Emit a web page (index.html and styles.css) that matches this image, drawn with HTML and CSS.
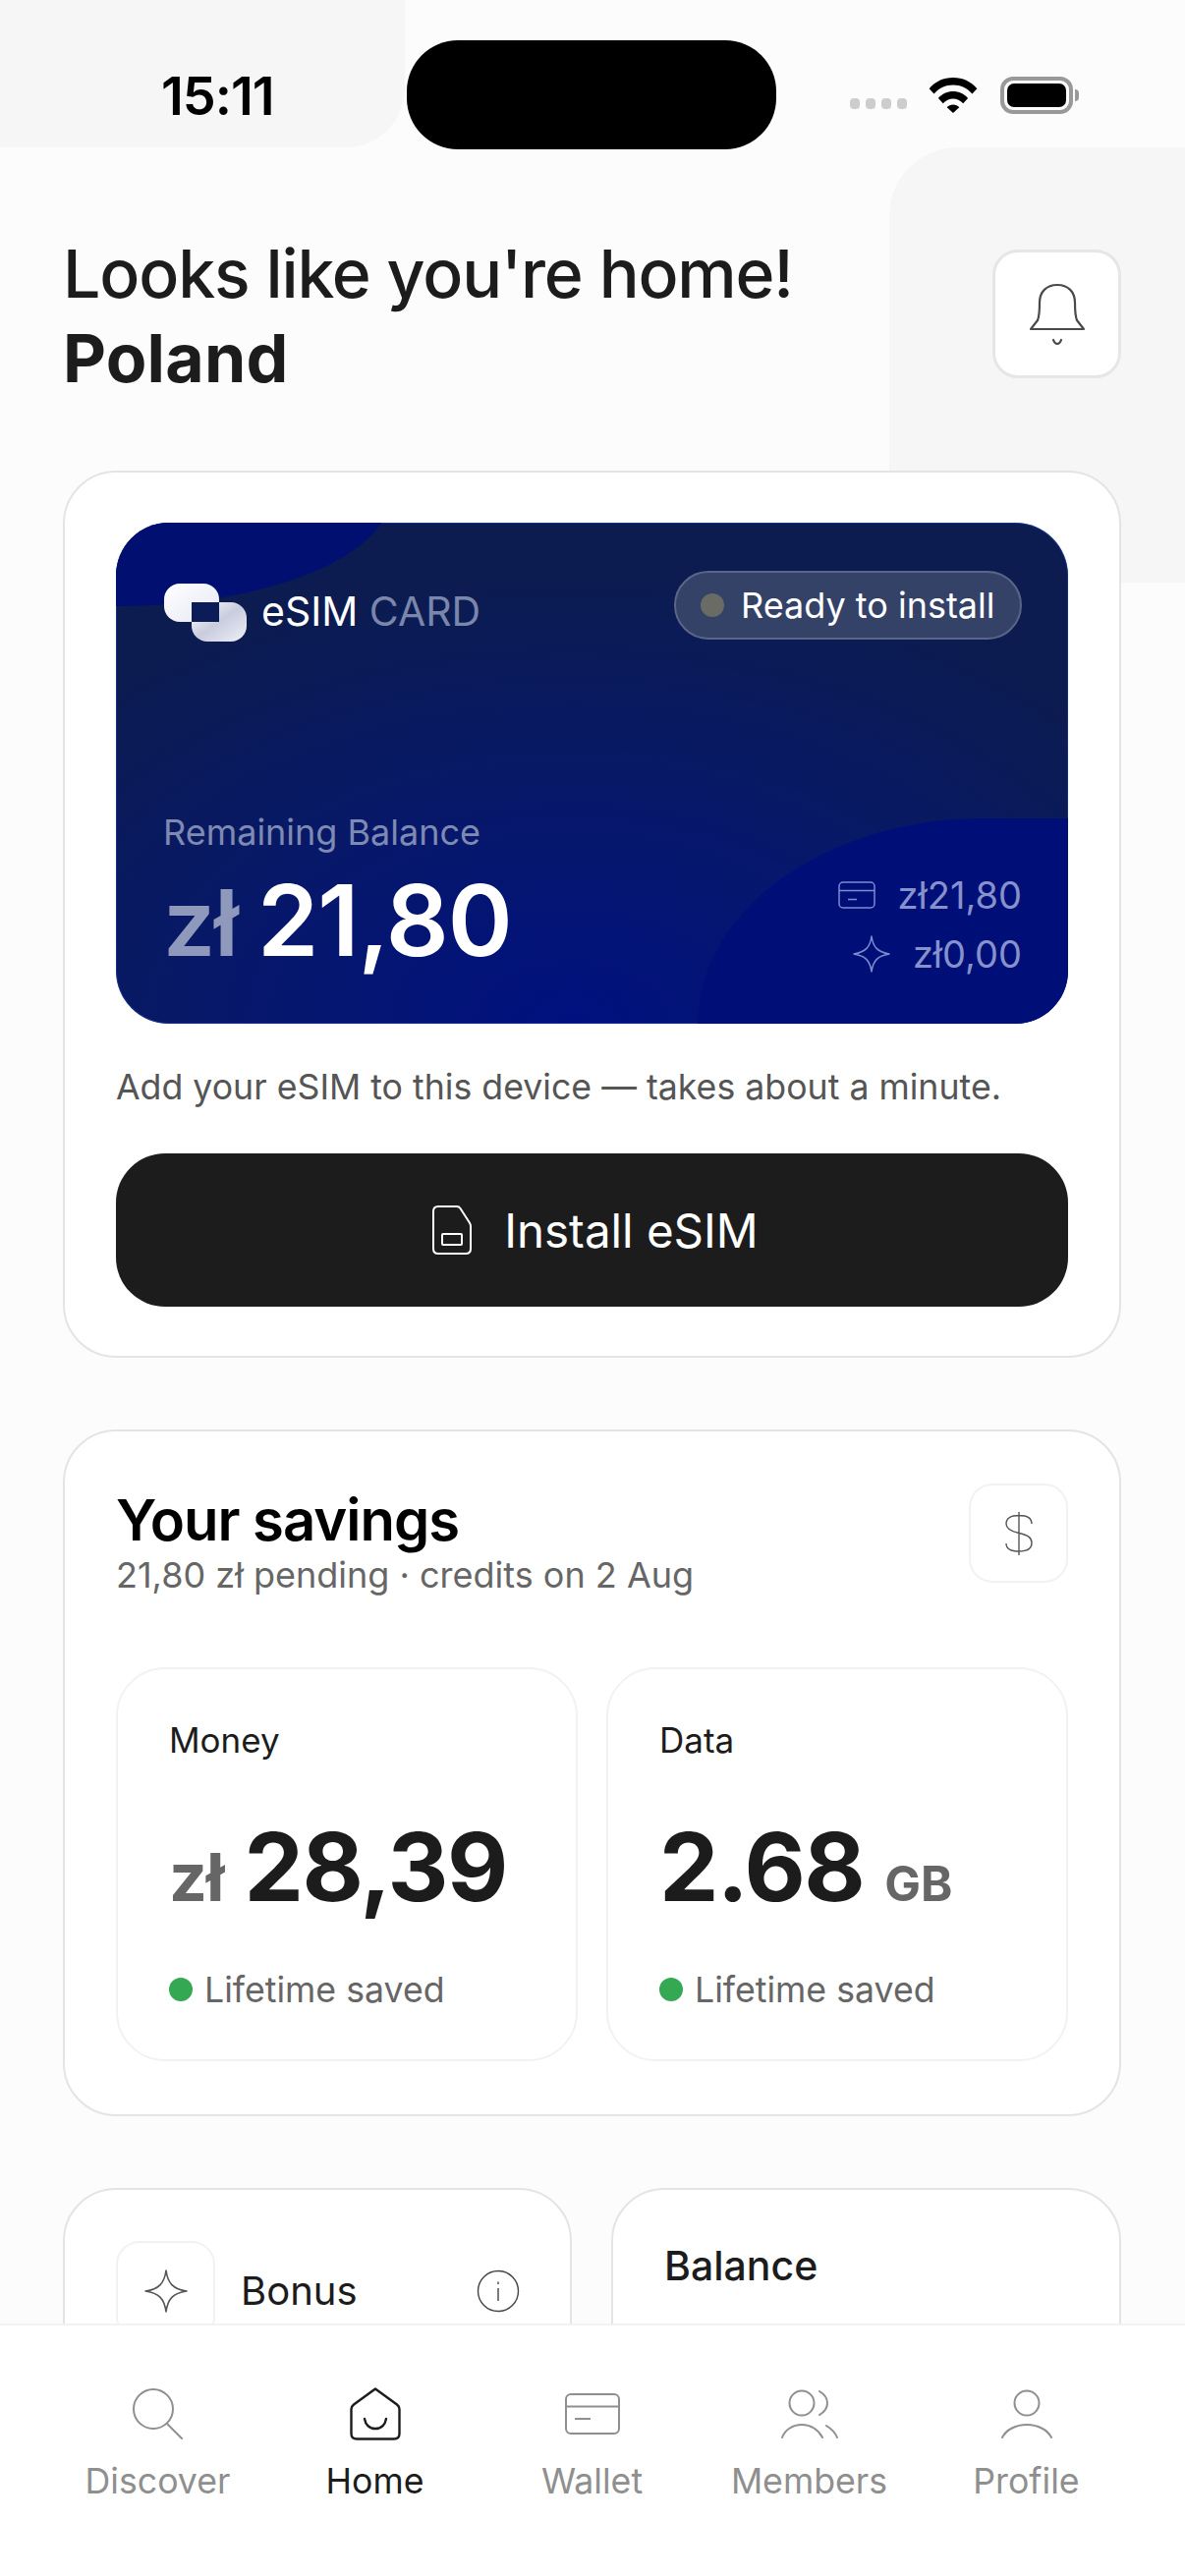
FILE: index.html
```html
<!DOCTYPE html>
<html lang="en">
<head>
  <meta charset="UTF-8">
  <meta name="viewport" content="width=device-width, initial-scale=1.0">
  <title>Home</title>
  <link rel="stylesheet" href="styles.css">
</head>
<body>
  <div class="screen">
    <div class="bg-shape-left"></div>
    <div class="bg-shape-right"></div>
    <div class="island"></div>

    <header class="status-bar">
      <span class="time">15:11</span>
      <div class="status-icons">
        <div class="signal"><i></i><i></i><i></i><i></i></div>
        <svg class="wifi" viewBox="0 0 50 38">
          <path d="M0 12.500C6.500 5 15 1 25 1s18.500 4 25 11.500l-5 5.500C39.500 12 33 8.800 25 8.800S10.500 12 5 18z"/>
          <path d="M9.500 22.500C13.500 18 19 15.500 25 15.500s11.500 2.500 15.500 7l-5 5.500C32.500 25 29 23.200 25 23.200S17.500 25 14.500 28z"/>
          <path d="M18.500 32c1.800-1.800 4-2.800 6.500-2.800s4.700 1 6.500 2.800L25 38z"/>
        </svg>
        <div class="battery"><div class="battery-fill"></div></div>
        <div class="battery-cap"></div>
      </div>
    </header>

    <main class="content">
      <section class="greeting">
        <h1>Looks like you're home!<br><strong>Poland</strong></h1>
        <button class="bell-btn">
          <svg width="58" height="64" viewBox="0 0 58 64" fill="none" stroke="#4a4a4a" stroke-width="2.200">
            <path d="M2 47l7-9c2-5 2-10 2-18C11 9 18 2 29 2s18 7 18 18c0 8 0 13 2 18l7 9z" stroke-linejoin="round"/>
            <path d="M25 58c1 3 2 4 4 4s3-1 4-4" stroke-linecap="round"/>
          </svg>
        </button>
      </section>

      <section class="card install-card">
        <div class="esim">
          <div class="blob-top"></div>
          <div class="blob-bottom"></div>
          <div class="esim-top">
            <div class="esim-brand">
              <svg class="esim-logo" width="86" height="62" viewBox="0 0 86 62">
                <defs>
                  <linearGradient id="logoA" x1="0" y1="0" x2="1" y2="1">
                    <stop offset="0" stop-color="#ffffff"/>
                    <stop offset="1" stop-color="#e6e8f4"/>
                  </linearGradient>
                  <linearGradient id="logoB" x1="0" y1="0" x2="1" y2="1">
                    <stop offset="0" stop-color="#ffffff"/>
                    <stop offset="0.5" stop-color="#c9ccdd"/>
                    <stop offset="1" stop-color="#eef0f7"/>
                  </linearGradient>
                </defs>
                <rect x="1" y="1" width="56" height="39" rx="16" fill="url(#logoA)"/>
                <rect x="29" y="20" width="56" height="40" rx="16" fill="url(#logoB)"/>
                <rect x="29" y="20" width="28" height="20" fill="#0c1c58"/>
              </svg>
              <span class="esim-name">eSIM <span class="esim-name-dim">CARD</span></span>
            </div>
            <div class="pill"><span class="pill-dot"></span>Ready to install</div>
          </div>
          <div class="esim-bottom">
            <div>
              <div class="remain-label">Remaining Balance</div>
              <div class="remain-amount"><span class="remain-cur">zł</span> 21,80</div>
            </div>
            <div class="breakdown">
              <div class="breakdown-row">
                <svg width="38" height="28" viewBox="0 0 38 28" fill="none" stroke="#7f8ad0" stroke-width="1.500">
                  <rect x="1" y="1" width="36" height="26" rx="4"/>
                  <path d="M1 9.500h36M10 18.500h9"/>
                </svg>
                <span>zł21,80</span>
              </div>
              <div class="breakdown-row">
                <svg width="38" height="38" viewBox="0 0 38 38" fill="none" stroke="#7f8ad0" stroke-width="1.500">
                  <path d="M19 1c1.500 11 6 16 18 18-12 2-16.500 7-18 18-1.500-11-6-16-18-18 12-2 16.500-7 18-18z" stroke-linejoin="round"/>
                </svg>
                <span>zł0,00</span>
              </div>
            </div>
          </div>
        </div>
        <p class="install-note">Add your eSIM to this device — takes about a minute.</p>
        <button class="install-btn">
          <svg width="40" height="50" viewBox="0 0 40 50" fill="none" stroke="#fff" stroke-width="2">
            <path d="M6 1h19c1.500 0 2.500.5 3.500 2L37.500 17c1 1.500 1.500 2.500 1.500 4v23c0 3-2 5-5 5H6c-3 0-5-2-5-5V6c0-3 2-5 5-5z"/>
            <rect x="10" y="29" width="20" height="11" rx="1"/>
          </svg>
          Install eSIM
        </button>
      </section>

      <section class="card savings-card">
        <div class="savings-head">
          <div class="savings-text">
            <h2>Your savings</h2>
            <p class="savings-sub">21,80 zł pending · credits on 2 Aug</p>
          </div>
          <div class="icon-box">
            <svg width="30" height="46" viewBox="0 0 30 46" fill="none" stroke="#555" stroke-width="1.400">
              <path d="M28 13c0-6-5-8.500-13-8.500S2 7 2 13c0 5 4 7.500 13 9.500s13 4.500 13 10c0 6-5 8.500-13 8.500S2 38.500 2 33M15 1v44"/>
            </svg>
          </div>
        </div>
        <div class="savings-grid">
          <div class="stat">
            <div class="stat-label">Money</div>
            <div class="stat-value"><span class="stat-cur">zł</span> 28,39</div>
            <div class="stat-foot"><span class="green-dot"></span>Lifetime saved</div>
          </div>
          <div class="stat">
            <div class="stat-label">Data</div>
            <div class="stat-value">2.68 <span class="stat-unit">GB</span></div>
            <div class="stat-foot"><span class="green-dot"></span>Lifetime saved</div>
          </div>
        </div>
      </section>

      <section class="bottom-cards">
        <div class="card mini-card">
          <div class="bonus-row">
            <div class="icon-box">
              <svg width="44" height="44" viewBox="0 0 44 44" fill="none" stroke="#555" stroke-width="1.600">
                <path d="M22 1c1.800 13 7 19 21 21-14 2-19.200 8-21 21-1.800-13-7-19-21-21 14-2 19.200-8 21-21z" stroke-linejoin="round"/>
              </svg>
            </div>
            <span class="bonus-label">Bonus</span>
            <svg class="info" width="44" height="44" viewBox="0 0 44 44" fill="none" stroke="#444" stroke-width="1.400">
              <circle cx="22" cy="22" r="20.500"/>
              <path d="M22 19v13M22 12.500v2.500"/>
            </svg>
          </div>
        </div>
        <div class="card mini-card">
          <div class="balance-label">Balance</div>
        </div>
      </section>
    </main>

    <nav class="tabbar">
      <div class="tab">
        <div class="tab-icon">
          <svg width="52" height="52" viewBox="0 0 52 52" fill="none" stroke="#8f8f8f" stroke-width="2">
            <circle cx="21" cy="21" r="20"/><path d="M35 36l15 15" stroke-linecap="round"/>
          </svg>
        </div>
        <span>Discover</span>
      </div>
      <div class="tab active">
        <div class="tab-icon">
          <svg width="52" height="54" viewBox="0 0 52 54" fill="none" stroke="#1c1c1c" stroke-width="2.400">
            <path d="M26 1.500L48 17.500Q50.500 19.500 50.500 22V47Q50.500 52.500 45 52.500H7Q1.500 52.500 1.500 47V22Q1.500 19.500 4 17.500z" stroke-linejoin="round"/>
            <path d="M15 32c1 6 5 10 11 10s10-4 11-10" stroke-linecap="round"/>
          </svg>
        </div>
        <span>Home</span>
      </div>
      <div class="tab">
        <div class="tab-icon">
          <svg width="56" height="42" viewBox="0 0 56 42" fill="none" stroke="#8f8f8f" stroke-width="2">
            <rect x="1" y="1" width="54" height="40" rx="5"/>
            <path d="M1 13.500h54M10 26h16"/>
          </svg>
        </div>
        <span>Wallet</span>
      </div>
      <div class="tab">
        <div class="tab-icon">
          <svg width="58" height="50" viewBox="0 0 58 50" fill="none" stroke="#8f8f8f" stroke-width="2">
            <circle cx="21" cy="14" r="12.500"/>
            <path d="M39 2c5 3 8 7 8 12s-3 9-8 12M1 49c3-8 11-13 20-13s17 5 21 13M46 37c5 3 9 7 11 12" stroke-linecap="round"/>
          </svg>
        </div>
        <span>Members</span>
      </div>
      <div class="tab">
        <div class="tab-icon">
          <svg width="52" height="50" viewBox="0 0 52 50" fill="none" stroke="#8f8f8f" stroke-width="2">
            <circle cx="26" cy="14" r="12.500"/>
            <path d="M1 49c4-8 14-13 25-13s21 5 25 13" stroke-linecap="round"/>
          </svg>
        </div>
        <span>Profile</span>
      </div>
    </nav>
  </div>
</body>
</html>
```

FILE: styles.css
```css
* {
  box-sizing: border-box;
}

body {
  margin: 0;
  padding: 0;
  font-family: 'Inter', 'Liberation Sans', sans-serif;
  background-color: #fcfcfc;
  color: #1c1c1c;
}

.screen {
  position: relative;
  width: 1206px;
  height: 2622px;
  overflow: hidden;
  display: flex;
  flex-direction: column;
}

.bg-shape-left {
  position: absolute;
  left: 0;
  top: 0;
  width: 412px;
  height: 150px;
  background-color: #f6f6f6;
  border-bottom-right-radius: 60px;
}

.bg-shape-right {
  position: absolute;
  left: 905px;
  top: 150px;
  width: 301px;
  height: 443px;
  background-color: #f6f6f6;
  border-top-left-radius: 70px;
}

.island {
  position: absolute;
  left: 414px;
  top: 41px;
  width: 376px;
  height: 111px;
  background-color: #000;
  border-radius: 52px;
}

/* status bar */
.status-bar {
  position: relative;
  height: 150px;
  flex-shrink: 0;
  display: flex;
  justify-content: space-between;
  padding: 0 108px 0 164px;
}

.time {
  font-size: 54px;
  font-weight: 600;
  color: #000;
  line-height: 50px;
  margin-top: 73px;
  letter-spacing: -1px;
}

.status-icons {
  display: flex;
  align-items: center;
  height: 40px;
  margin-top: 77px;
}

.signal {
  display: flex;
  gap: 6px;
  margin-top: 16px;
  margin-right: 22px;
}

.signal i {
  display: block;
  width: 10px;
  height: 11px;
  border-radius: 4px;
  background-color: #cdcdcd;
}

.wifi {
  width: 50px;
  height: 37px;
  margin-right: 23px;
  margin-top: -2px;
}

.battery {
  width: 74px;
  height: 38px;
  border: 4px solid #999;
  border-radius: 13px;
  padding: 3px;
}

.battery-fill {
  width: 100%;
  height: 100%;
  background-color: #000;
  border-radius: 7px;
}

.battery-cap {
  width: 4px;
  height: 12px;
  margin-left: 2px;
  background-color: #999;
  border-radius: 0 4px 4px 0;
}

/* main scroll area */
.content {
  position: relative;
  flex: 1;
  overflow: hidden;
  padding: 85px 65px 0 64px;
}

.greeting {
  display: flex;
  justify-content: space-between;
  align-items: center;
  margin-bottom: 72px;
}

h1 {
  margin: 0;
  font-size: 68px;
  font-weight: 500;
  line-height: 86px;
  letter-spacing: -1.15px;
  color: #1c1c1c;
}

h1 strong {
  font-weight: 700;
  letter-spacing: 0.2px;
}

.bell-btn {
  width: 131px;
  height: 131px;
  padding: 0;
  margin-bottom: 3px;
  display: flex;
  align-items: center;
  justify-content: center;
  background-color: #fff;
  border: 3px solid #e6e6e6;
  border-radius: 26px;
}

.card {
  background-color: #fff;
  border: 2px solid #e4e4e4;
  border-radius: 54px;
}

.install-card {
  height: 903px;
  padding: 51px 52px;
  margin-bottom: 73px;
}

/* esim card */
.esim {
  position: relative;
  height: 510px;
  overflow: hidden;
  border-radius: 54px;
  padding: 49px 47px 0 48px;
  color: #fff;
  display: flex;
  flex-direction: column;
  justify-content: space-between;
  background: radial-gradient(ellipse 75% 90% at 48% 100%, #00107f 0%, #07186a 50%, #0c1c50 100%);
  box-shadow: inset 0 0 0 1px rgba(30, 70, 190, 0.5);
}

.blob-top {
  position: absolute;
  left: -280px;
  top: -145px;
  width: 560px;
  height: 230px;
  border-radius: 50%;
  background-color: #000f70;
}

.blob-bottom {
  position: absolute;
  left: 592px;
  top: 301px;
  width: 700px;
  height: 600px;
  border-top-left-radius: 290px 210px;
  background-color: #000f78;
}

.esim-top {
  position: relative;
  display: flex;
  justify-content: space-between;
  align-items: flex-start;
}

.esim-brand {
  display: flex;
  align-items: center;
  gap: 14px;
  margin-top: 12px;
}

.esim-name {
  font-size: 41px;
  color: #fff;
  margin-top: -4px;
}

.esim-name-dim {
  color: #7b86ab;
}

.pill {
  display: flex;
  align-items: center;
  gap: 17px;
  width: 354px;
  height: 70px;
  padding-left: 25px;
  font-size: 36px;
  color: #fff;
  background-color: #354268;
  border: 2px solid #5a6588;
  border-radius: 35px;
}

.pill-dot {
  width: 24px;
  height: 24px;
  border-radius: 50%;
  background-color: #6b6b66;
}

.esim-bottom {
  position: relative;
  display: flex;
  justify-content: space-between;
  align-items: flex-end;
  padding-bottom: 48px;
}

.remain-label {
  font-size: 36px;
  color: #7f8ab3;
  margin-bottom: 13px;
}

.remain-amount {
  font-size: 100px;
  font-weight: 600;
  line-height: 110px;
  letter-spacing: -1px;
  word-spacing: -4px;
}

.remain-cur {
  font-size: 94px;
  color: #8f99bb;
}

.breakdown {
  display: flex;
  flex-direction: column;
  align-items: flex-end;
  gap: 18px;
  margin-bottom: 2px;
  color: #8791cc;
  font-size: 38px;
}

.breakdown-row {
  display: flex;
  align-items: center;
  gap: 23px;
  height: 42px;
}

.install-note {
  margin: 42px 0 0;
  font-size: 35.7px;
  line-height: 44px;
  color: #555;
}

.install-btn {
  width: 100%;
  height: 156px;
  margin-top: 46px;
  padding: 0 0 0 7px;
  display: flex;
  align-items: center;
  justify-content: center;
  gap: 33px;
  background-color: #1c1c1c;
  color: #fff;
  border: none;
  border-radius: 50px;
  font-family: inherit;
  font-size: 47.5px;
}

/* savings */
.savings-card {
  height: 699px;
  padding: 53px 52px 0;
  margin-bottom: 73px;
}

.savings-head {
  display: flex;
  justify-content: space-between;
  align-items: flex-start;
}

.savings-text {
  padding-top: 3px;
}

h2 {
  margin: 0;
  font-size: 58px;
  font-weight: 600;
  line-height: 68px;
  letter-spacing: -1px;
  color: #000;
}

.savings-sub {
  margin: 0;
  font-size: 36px;
  line-height: 44px;
  color: #666;
}

.icon-box {
  width: 101px;
  height: 101px;
  flex-shrink: 0;
  display: flex;
  align-items: center;
  justify-content: center;
  background-color: #fff;
  border: 2px solid #f2f2f2;
  border-radius: 24px;
}

.savings-grid {
  display: grid;
  grid-template-columns: 470px 470px;
  gap: 29px;
  margin-top: 72px;
}

.stat {
  height: 401px;
  padding: 50px 52px 0;
  border: 2px solid #f2f2f2;
  border-radius: 50px;
}

.stat-label {
  font-size: 35px;
  line-height: 44px;
  color: #1c1c1c;
}

.stat-value {
  height: 116px;
  margin-top: 49px;
  font-size: 96px;
  font-weight: 700;
  line-height: 116px;
  letter-spacing: -1.6px;
  word-spacing: 0;
  white-space: nowrap;
}

.stat-cur {
  font-size: 68px;
  color: #666;
  letter-spacing: -1px;
}

.stat-unit {
  font-size: 49px;
  color: #666;
  letter-spacing: 0;
}

.stat-foot {
  display: flex;
  align-items: center;
  gap: 12px;
  margin-top: 45px;
  font-size: 35.7px;
  line-height: 44px;
  color: #666;
}

.green-dot {
  width: 24px;
  height: 24px;
  border-radius: 50%;
  background-color: #34a853;
}

/* bottom half-hidden cards */
.bottom-cards {
  display: grid;
  grid-template-columns: 518px 519px;
  gap: 40px;
}

.mini-card {
  height: 320px;
  padding: 52px 52px 0;
}

.bonus-row {
  display: flex;
  align-items: center;
}

.bonus-label {
  margin-left: 26px;
  font-size: 40px;
}

.info {
  margin-left: auto;
  margin-right: -1px;
}

.balance-label {
  font-size: 41px;
  font-weight: 500;
  line-height: 50px;
}

/* tab bar */
.tabbar {
  position: relative;
  height: 257px;
  flex-shrink: 0;
  display: grid;
  grid-template-columns: repeat(5, 221px);
  padding: 0 50px;
  background-color: #fff;
  border-top: 2px solid #f2f2f2;
}

.tab {
  display: flex;
  flex-direction: column;
  align-items: center;
  padding-top: 62px;
  color: #8f8f8f;
  font-size: 35.7px;
  gap: 18px;
}

.tab-icon {
  height: 56px;
  display: flex;
  align-items: center;
}

.tab span {
  line-height: 44px;
}

.tab.active {
  color: #1c1c1c;
}
```
